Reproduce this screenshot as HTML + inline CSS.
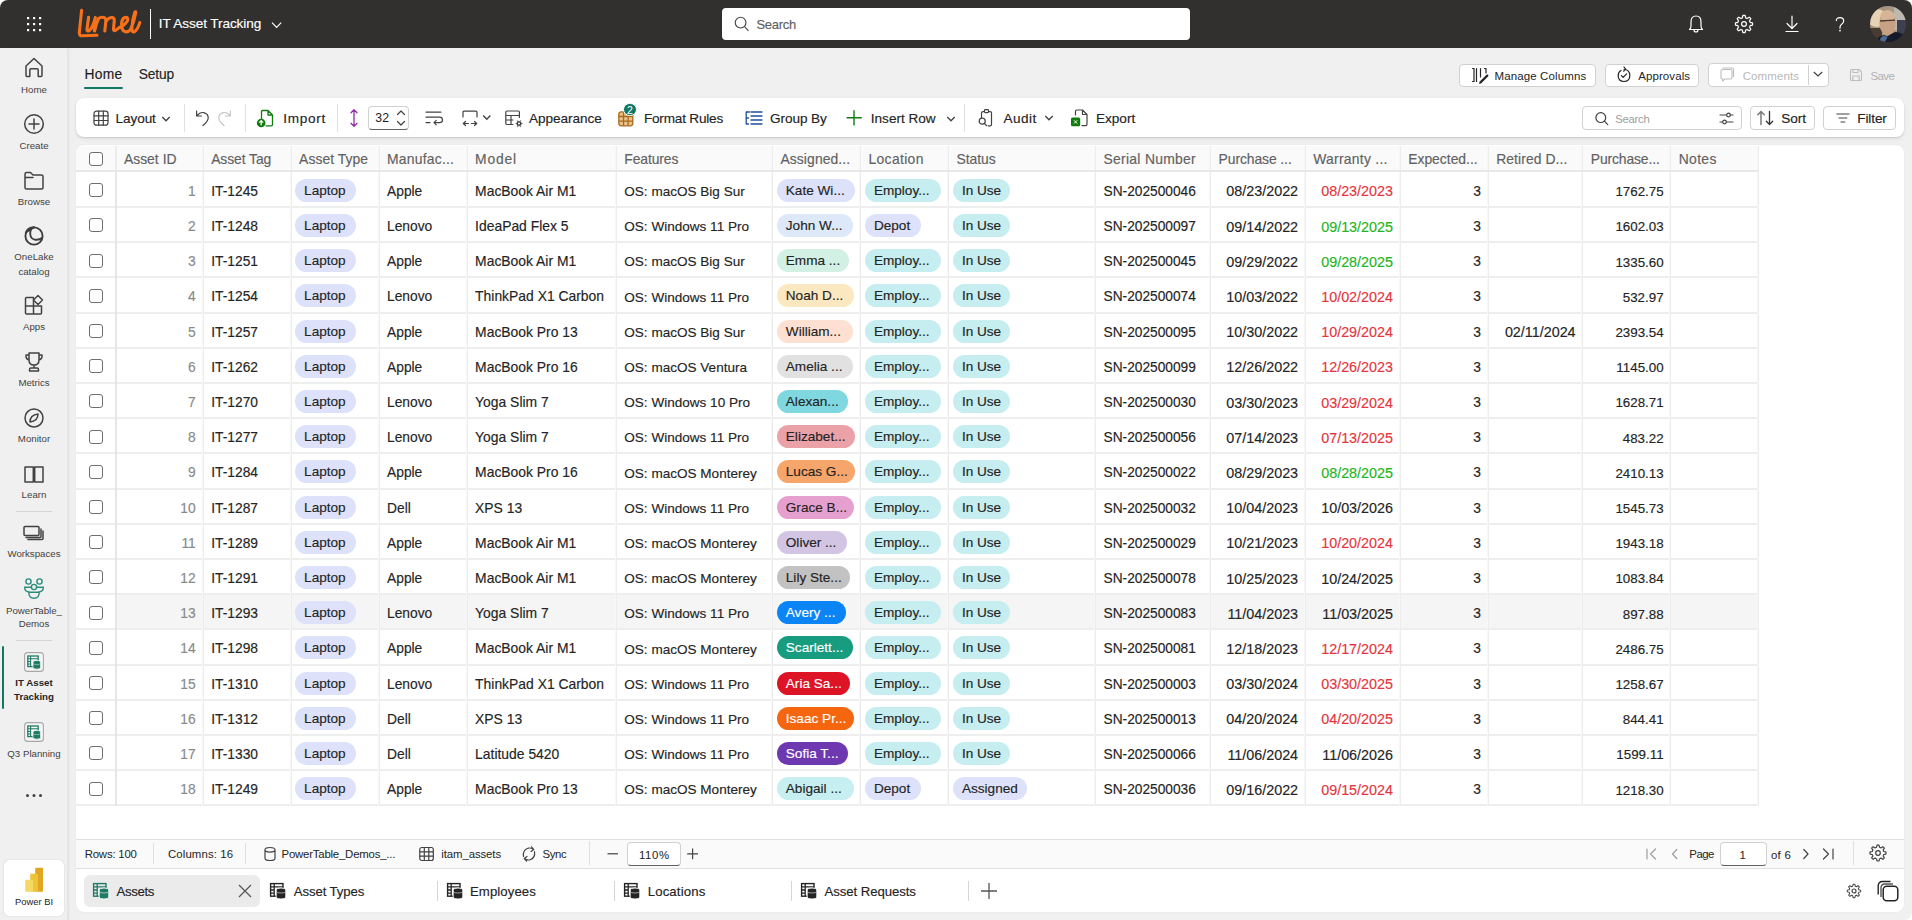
<!DOCTYPE html><html><head><meta charset="utf-8"><title>IT Asset Tracking</title><style>
*{box-sizing:border-box;margin:0;padding:0}
html,body{width:1912px;height:920px;overflow:hidden;background:#ffffff}
body{font-family:"Liberation Sans",sans-serif;color:#242424;position:relative}
.a{position:absolute}
.app{position:absolute;left:0;top:0;width:1912px;height:920px;background:#f0f0f0;border-radius:8px 8px 8px 0;overflow:hidden}
.top{position:absolute;left:0;top:0;width:1912px;height:48px;background:#31302e}
.nav{position:absolute;left:0;top:48px;width:68px;height:872px;background:#f0f0f0;border-right:1px solid #e3e3e3;box-shadow:1px 0 2px rgba(0,0,0,.06)}
.nl{position:absolute;left:0;width:68px;text-align:center;font-size:9.7px;color:#424242;line-height:13.5px;white-space:nowrap}
.ni{position:absolute;left:24px;width:20px;height:20px}
.t{position:absolute;white-space:nowrap;line-height:1;-webkit-text-stroke:0.15px currentColor}
.card{position:absolute;background:#fff;border-radius:8px}
.btn{position:absolute;background:#fff;border:1px solid #d1d1d1;border-radius:4px}
.sep{position:absolute;width:1px;background:#e0e0e0}
svg{position:absolute;overflow:visible}
.row{position:absolute;left:76px;width:1683px;height:35.2px;border-bottom:1px solid #e6e6e6}
.c{position:absolute;top:0;height:35px;font-size:13.8px;line-height:35px;white-space:nowrap;overflow:hidden;color:#242424}
.r{text-align:right}
.chip{-webkit-text-stroke:0.15px currentColor;position:absolute;top:6.6px;height:23px;border-radius:12px;font-size:13.6px;line-height:23px;padding-left:9px;white-space:nowrap;overflow:hidden;color:#242424}
.vl{position:absolute;width:1px;background:#e6e6e6}
.hd{position:absolute;top:0;height:26px;font-size:13.7px;line-height:26px;color:#616161;white-space:nowrap}
.cb{position:absolute;width:14px;height:14px;border:1.3px solid #6e6e6e;border-radius:3px;background:#fff}
.tab{position:absolute;top:875px;height:32px;font-size:13.2px;line-height:32px;color:#242424;white-space:nowrap}
.st{position:absolute;top:839px;height:29px;line-height:29px;font-size:11.3px;color:#424242;white-space:nowrap}
</style></head><body><div class="app">
<div class="top">
<svg style="left:0px;top:0px;" width="60" height="48" viewBox="0 0 60 48"><rect x="27" y="17" width="2.2" height="2.2" fill="#fff"/><rect x="27" y="23" width="2.2" height="2.2" fill="#fff"/><rect x="27" y="29" width="2.2" height="2.2" fill="#fff"/><rect x="33" y="17" width="2.2" height="2.2" fill="#fff"/><rect x="33" y="23" width="2.2" height="2.2" fill="#fff"/><rect x="33" y="29" width="2.2" height="2.2" fill="#fff"/><rect x="39" y="17" width="2.2" height="2.2" fill="#fff"/><rect x="39" y="23" width="2.2" height="2.2" fill="#fff"/><rect x="39" y="29" width="2.2" height="2.2" fill="#fff"/></svg>
<svg style="left:72px;top:6px;" width="72" height="36" viewBox="0 0 72 36"><g fill="none" stroke="#f7701a" stroke-width="3.1" stroke-linecap="round" stroke-linejoin="round"><path d="M9.6,4.4 L7.3,26.5 Q7,30 10.5,29.8 L25,29.3"/><path d="M16.6,11.2 L15,23.2 Q14.6,26 17.5,24.5 Q21,21 23.3,11.6 L22.3,24.8"/><path d="M22.6,24.8 Q24.4,17 26.6,12.4 Q28.5,10.8 31.8,11.4 Q34.2,12.2 33.8,15.5 L32.8,25 M33.8,16 Q36.5,11.3 40.2,11.5 Q42.6,12 42.3,15 L41.5,22.2 Q41.2,25.4 43.6,24.3 Q45.8,22.8 47.2,21.6"/><path d="M47.2,21.6 Q51.5,20.5 55.3,15.2 Q56.8,11.6 54,11.4 Q50.3,11.6 49.6,17 Q49.1,24.5 53.3,25.8 Q56.2,26.3 58.6,23.4"/><path d="M58.6,23.4 Q62,16 63.7,6.6 Q63.9,5 62.8,6.3 Q60.1,14 59.9,23 Q59.9,26.6 62.5,25.7 Q65.8,23.4 67.8,16.6"/></g></svg>
<div class="a" style="left:150px;top:9px;width:1px;height:30px;background:#ffffff"></div>
<div class="t" style="left:158.80px;top:17.39px;font-size:13.6px;color:#ffffff;letter-spacing:-0.097px;">IT Asset Tracking</div>
<svg style="left:270px;top:20px;" width="14" height="10" viewBox="0 0 14 10"><polyline points="2,2.6 6.6,7.4 11.2,2.6" fill="none" stroke="#fff" stroke-width="1.2"/></svg>
<div class="a" style="left:722px;top:8px;width:468px;height:32px;background:#fff;border-radius:4px"></div>
<svg style="left:734px;top:16px;" width="18" height="18" viewBox="0 0 18 18"><circle cx="6.6" cy="6.6" r="5.4" fill="none" stroke="#424242" stroke-width="1.1"/><line x1="10.5" y1="10.5" x2="14.5" y2="14.8" stroke="#424242" stroke-width="1.1"/></svg>
<div class="t" style="left:756.40px;top:17.50px;font-size:13.0px;color:#616161;letter-spacing:-0.278px;">Search</div>
<svg style="left:1686px;top:14px;" width="20" height="20" viewBox="0 0 20 20"><path fill="none" stroke="#ffffff" stroke-width="1.2" stroke-linecap="round" stroke-linejoin="round" d="M3.5,15.5 L16.5,15.5 Q15,14 15,12 L15,8 Q15,2 10,2 Q5,2 5,8 L5,12 Q5,14 3.5,15.5 Z"/><path fill="none" stroke="#ffffff" stroke-width="1.2" stroke-linecap="round" stroke-linejoin="round" d="M8,15.7 Q8,18 10,18 Q12,18 12,15.7"/></svg>
<svg style="left:1734px;top:14px;" width="20" height="20" viewBox="0 0 20 20"><path fill="none" stroke="#ffffff" stroke-width="1.2" stroke-linecap="round" stroke-linejoin="round" d="M18.60,10.00 L18.53,11.12 L16.09,11.63 L15.82,12.41 L15.46,13.15 L16.82,15.24 L16.08,16.08 L15.24,16.82 L13.15,15.46 L12.41,15.82 L11.63,16.09 L11.12,18.53 L10.00,18.60 L8.88,18.53 L8.37,16.09 L7.59,15.82 L6.85,15.46 L4.76,16.82 L3.92,16.08 L3.18,15.24 L4.54,13.15 L4.18,12.41 L3.91,11.63 L1.47,11.12 L1.40,10.00 L1.47,8.88 L3.91,8.37 L4.18,7.59 L4.54,6.85 L3.18,4.76 L3.92,3.92 L4.76,3.18 L6.85,4.54 L7.59,4.18 L8.37,3.91 L8.88,1.47 L10.00,1.40 L11.12,1.47 L11.63,3.91 L12.41,4.18 L13.15,4.54 L15.24,3.18 L16.08,3.92 L16.82,4.76 L15.46,6.85 L15.82,7.59 L16.09,8.37 L18.53,8.88 Z"/><circle cx="10" cy="10" r="2.4" fill="none" stroke="#ffffff" stroke-width="1.2" stroke-linecap="round" stroke-linejoin="round"/></svg>
<svg style="left:1782px;top:14px;" width="20" height="20" viewBox="0 0 20 20"><path fill="none" stroke="#ffffff" stroke-width="1.2" stroke-linecap="round" stroke-linejoin="round" d="M10,2 L10,14 M5,9.5 L10,14.5 L15,9.5 M4,17.5 L16,17.5"/></svg>
<svg style="left:1832px;top:14px;" width="16" height="20" viewBox="0 0 16 20"><path fill="none" stroke="#ffffff" stroke-width="1.2" stroke-linecap="round" stroke-linejoin="round" d="M4.3,6.6 Q4.3,3.6 8,3.6 Q11.7,3.6 11.7,6.8 Q11.7,9 9.4,10.4 Q8,11.3 8,13.4 L8,14.2"/><circle cx="8" cy="16.6" r="0.9" fill="#fff"/></svg>
<svg style="left:1870px;top:6px;" width="36" height="36" viewBox="0 0 36 36"><defs><clipPath id="avc"><circle cx="18" cy="18" r="18"/></clipPath></defs><g clip-path="url(#avc)" style="filter:blur(0.5px)"><rect width="36" height="36" fill="#a89580"/><ellipse cx="7" cy="12" rx="10" ry="9" fill="#e6d2b4"/><rect x="24" y="0" width="12" height="24" fill="#bdb8b0"/><rect x="27" y="14" width="9" height="22" fill="#3c4050"/><rect x="0" y="22" width="12" height="14" fill="#4a3b30"/><ellipse cx="17.5" cy="17" rx="8.2" ry="12" fill="#c8a182"/><ellipse cx="17.5" cy="10" rx="7" ry="6" fill="#d5b595"/><path d="M10,15 L25,14.2" stroke="#4a3a35" stroke-width="1.3"/><path d="M4,36 L9,31 Q14,28 17,30.5 Q21,28 25,26 Q31,26 36,31 L36,36 Z" fill="#161a28"/><path d="M9,36 L11,31.5 Q14,29 17.5,31 L15,36 Z" fill="#4d6a98"/></g></svg>
</div>
<div class="nav"></div>
<svg style="left:0px;top:48px;" width="68" height="40" viewBox="0 0 68 40"><path fill="none" stroke="#424242" stroke-width="1.5" stroke-linecap="round" stroke-linejoin="round" d="M26,18 L34,10.5 L42,18 L42,27.5 Q42,28.5 41,28.5 L38.2,28.5 L38.2,22 Q38.2,20.8 37,20.8 L31,20.8 Q29.8,20.8 29.8,22 L29.8,28.5 L27,28.5 Q26,28.5 26,27.5 Z"/></svg>
<div class="t" style="left:0;width:68px;text-align:center;top:84.79px;font-size:9.7px;color:#424242;-webkit-text-stroke:0;">Home</div>
<svg style="left:0px;top:104px;" width="68" height="40" viewBox="0 0 68 40"><circle cx="34" cy="20" r="9.3" fill="none" stroke="#424242" stroke-width="1.5" stroke-linecap="round" stroke-linejoin="round"/><path fill="none" stroke="#424242" stroke-width="1.5" stroke-linecap="round" stroke-linejoin="round" d="M34,15 L34,25 M29,20 L39,20"/></svg>
<div class="t" style="left:0;width:68px;text-align:center;top:141.09px;font-size:9.7px;color:#424242;-webkit-text-stroke:0;">Create</div>
<svg style="left:0px;top:160px;" width="68" height="40" viewBox="0 0 68 40"><path fill="none" stroke="#424242" stroke-width="1.5" stroke-linecap="round" stroke-linejoin="round" d="M25,14 Q25,12.5 26.5,12.5 L30.5,12.5 L33,15 L41.5,15 Q43,15 43,16.5 L43,27.5 Q43,29 41.5,29 L26.5,29 Q25,29 25,27.5 Z M25,17.5 L33,17.5"/></svg>
<div class="t" style="left:0;width:68px;text-align:center;top:197.09px;font-size:9.7px;color:#424242;-webkit-text-stroke:0;">Browse</div>
<svg style="left:0px;top:216px;" width="68" height="40" viewBox="0 0 68 40"><circle cx="34" cy="20" r="8.6" fill="none" stroke="#3d3d3d" stroke-width="1.9"/><path d="M25.6,17.5 Q27.5,11.2 34.5,11.3 Q31.2,12.2 30.3,14.8" fill="#3d3d3d" stroke="#3d3d3d" stroke-width="2"/><path d="M30.4,14.5 Q29.2,22.5 34.5,23.6 Q39,24.4 42.4,21.8" fill="none" stroke="#3d3d3d" stroke-width="1.9"/></svg>
<div class="t" style="left:0;width:68px;text-align:center;top:252.49px;font-size:9.7px;color:#424242;-webkit-text-stroke:0;">OneLake</div>
<div class="t" style="left:0;width:68px;text-align:center;top:266.69px;font-size:9.7px;color:#424242;-webkit-text-stroke:0;">catalog</div>
<svg style="left:0px;top:286px;" width="68" height="40" viewBox="0 0 68 40"><path fill="none" stroke="#424242" stroke-width="1.5" stroke-linecap="round" stroke-linejoin="round" d="M25.5,20 L33.5,20 L33.5,28 L26.5,28 Q25.5,28 25.5,27 Z M33.5,20 L41.5,20 L41.5,27 Q41.5,28 40.5,28 L33.5,28 M25.5,20 L25.5,12.5 Q25.5,11.5 26.5,11.5 L33.5,11.5 L33.5,20"/><path fill="none" stroke="#424242" stroke-width="1.5" stroke-linecap="round" stroke-linejoin="round" d="M38,9.5 L42.5,14 L38,18.5 L33.5,14 Z"/></svg>
<div class="t" style="left:0;width:68px;text-align:center;top:322.29px;font-size:9.7px;color:#424242;-webkit-text-stroke:0;">Apps</div>
<svg style="left:0px;top:342px;" width="68" height="40" viewBox="0 0 68 40"><path fill="none" stroke="#424242" stroke-width="1.5" stroke-linecap="round" stroke-linejoin="round" d="M29,11 L39,11 L39,18 Q39,23 34,23 Q29,23 29,18 Z M29,13 L26,13 Q25.5,17 29,18 M39,13 L42,13 Q42.5,17 39,18 M34,23 L34,26 M29.5,29 L38.5,29 L38.5,27.5 Q38.5,26 37,26 L31,26 Q29.5,26 29.5,27.5 Z"/></svg>
<div class="t" style="left:0;width:68px;text-align:center;top:378.19px;font-size:9.7px;color:#424242;-webkit-text-stroke:0;">Metrics</div>
<svg style="left:0px;top:398px;" width="68" height="40" viewBox="0 0 68 40"><circle cx="34" cy="20" r="9" fill="none" stroke="#424242" stroke-width="1.5" stroke-linecap="round" stroke-linejoin="round"/><path fill="none" stroke="#424242" stroke-width="1.5" stroke-linecap="round" stroke-linejoin="round" d="M30,24 Q30,17 38,16 Q38,23 30,24 Z"/></svg>
<div class="t" style="left:0;width:68px;text-align:center;top:434.19px;font-size:9.7px;color:#424242;-webkit-text-stroke:0;">Monitor</div>
<svg style="left:0px;top:456px;" width="68" height="40" viewBox="0 0 68 40"><path fill="none" stroke="#424242" stroke-width="1.5" stroke-linecap="round" stroke-linejoin="round" d="M25,11 L33.3,11 L33.3,26 L25,26 Z M34.7,11 L43,11 L43,26 L34.7,26 Z"/></svg>
<div class="t" style="left:0;width:68px;text-align:center;top:489.79px;font-size:9.7px;color:#424242;-webkit-text-stroke:0;">Learn</div>
<div class="a" style="left:16px;top:511px;width:36px;height:1px;background:#d6d6d6"></div>
<svg style="left:0px;top:516px;" width="68" height="40" viewBox="0 0 68 40"><path fill="none" stroke="#424242" stroke-width="1.5" stroke-linecap="round" stroke-linejoin="round" d="M25,10.5 L38,10.5 Q39,10.5 39,11.5 L39,18.5 Q39,19.5 38,19.5 L25,19.5 Q24,19.5 24,18.5 L24,11.5 Q24,10.5 25,10.5 Z M41,13 L41,20.5 Q41,21.5 40,21.5 L26,21.5 M43,15 L43,22.5 Q43,23.5 42,23.5 L28,23.5"/></svg>
<div class="t" style="left:0;width:68px;text-align:center;top:549.29px;font-size:9.7px;color:#424242;-webkit-text-stroke:0;">Workspaces</div>
<svg style="left:0px;top:570px;" width="68" height="40" viewBox="0 0 68 40"><circle cx="28.5" cy="11.5" r="2.6" fill="none" stroke="#2a8d7c" stroke-width="1.4" stroke-linecap="round"/><circle cx="39.5" cy="11.5" r="2.6" fill="none" stroke="#2a8d7c" stroke-width="1.4" stroke-linecap="round"/><circle cx="34" cy="17" r="2.6" fill="none" stroke="#2a8d7c" stroke-width="1.4" stroke-linecap="round"/><path fill="none" stroke="#2a8d7c" stroke-width="1.4" stroke-linecap="round" d="M24.6,17.3 Q24.8,21.8 29.4,22 M43.4,17.3 Q43.2,21.8 38.6,22 M24.6,17.3 L31.2,17.3 M36.8,17.3 L43.4,17.3 M28.8,22.2 L39.2,22.2 Q39.2,28.2 34,28.2 Q28.8,28.2 28.8,22.2 Z"/></svg>
<div class="t" style="left:0;width:68px;text-align:center;top:605.79px;font-size:9.7px;color:#424242;-webkit-text-stroke:0;">PowerTable_</div>
<div class="t" style="left:0;width:68px;text-align:center;top:618.99px;font-size:9.7px;color:#424242;-webkit-text-stroke:0;">Demos</div>
<div class="a" style="left:16px;top:640px;width:36px;height:1px;background:#d6d6d6"></div>
<div class="a" style="left:2px;top:646px;width:2.4px;height:63px;background:#117865;border-radius:1px"></div>
<svg style="left:24px;top:652px;" width="20" height="20" viewBox="0 0 20 20"><rect x="0.6" y="0.6" width="18.8" height="18.8" rx="3" fill="#f5f5f5" stroke="#a8a8a8" stroke-width="1.1"/><rect x="3.8" y="4" width="10.4" height="10.6" fill="none" stroke="#1f7a66" stroke-width="1.3"/><path d="M6.6,4 L6.6,14.6 M3.8,6.8 L14.2,6.8 M3.8,9.5 L6.6,9.5 M3.8,12 L6.6,12" fill="none" stroke="#1f7a66" stroke-width="1.1"/><path d="M9,10 Q9,8.4 12.8,8.4 Q16.6,8.4 16.6,10 L16.6,15.6 Q16.6,17.2 12.8,17.2 Q9,17.2 9,15.6 Z" fill="#1f7a66" stroke="#f5f5f5" stroke-width="0.8"/><path d="M9.3,11.4 Q9.3,12.6 12.8,12.6 Q16.3,12.6 16.3,11.4" fill="none" stroke="#fff" stroke-width="0.6" opacity="0.7"/></svg>
<div class="t" style="left:0;width:68px;text-align:center;top:678.39px;font-size:9.7px;color:#242424;-webkit-text-stroke:0;font-weight:bold;">IT Asset</div>
<div class="t" style="left:0;width:68px;text-align:center;top:691.79px;font-size:9.7px;color:#242424;-webkit-text-stroke:0;font-weight:bold;">Tracking</div>
<svg style="left:24px;top:722px;" width="20" height="20" viewBox="0 0 20 20"><rect x="0.6" y="0.6" width="18.8" height="18.8" rx="3" fill="#f5f5f5" stroke="#a8a8a8" stroke-width="1.1"/><rect x="3.8" y="4" width="10.4" height="10.6" fill="none" stroke="#1f7a66" stroke-width="1.3"/><path d="M6.6,4 L6.6,14.6 M3.8,6.8 L14.2,6.8 M3.8,9.5 L6.6,9.5 M3.8,12 L6.6,12" fill="none" stroke="#1f7a66" stroke-width="1.1"/><path d="M9,10 Q9,8.4 12.8,8.4 Q16.6,8.4 16.6,10 L16.6,15.6 Q16.6,17.2 12.8,17.2 Q9,17.2 9,15.6 Z" fill="#1f7a66" stroke="#f5f5f5" stroke-width="0.8"/><path d="M9.3,11.4 Q9.3,12.6 12.8,12.6 Q16.3,12.6 16.3,11.4" fill="none" stroke="#fff" stroke-width="0.6" opacity="0.7"/></svg>
<div class="t" style="left:0;width:68px;text-align:center;top:749.09px;font-size:9.7px;color:#424242;-webkit-text-stroke:0;">Q3 Planning</div>
<svg style="left:0px;top:790px;" width="68" height="10" viewBox="0 0 68 10"><circle cx="27.5" cy="5.5" r="1.5" fill="#424242"/><circle cx="34" cy="5.5" r="1.5" fill="#424242"/><circle cx="40.5" cy="5.5" r="1.5" fill="#424242"/></svg>
<div class="a" style="left:4px;top:860px;width:60px;height:56px;background:#fff;border-radius:6px;box-shadow:0 0 2px rgba(0,0,0,.12)"></div>
<svg style="left:24px;top:866px;" width="20" height="28" viewBox="0 0 20 28"><rect x="11.2" y="1.8" width="7.8" height="24" rx="1" fill="#e0a61f"/><rect x="6.2" y="7.8" width="7.8" height="18" rx="1" fill="#eec33a"/><rect x="1.2" y="13.8" width="7.8" height="12" rx="1" fill="#f5d866"/></svg>
<div class="t" style="left:0;width:68px;text-align:center;top:897.04px;font-size:9.4px;color:#242424;-webkit-text-stroke:0;">Power BI</div>
<div class="t" style="left:84.60px;top:68.12px;font-size:13.8px;color:#1c1c1c;letter-spacing:0.297px;">Home</div>
<div class="a" style="left:84px;top:86.6px;width:39px;height:2.6px;background:#117865;border-radius:1px"></div>
<div class="t" style="left:138.80px;top:68.12px;font-size:13.8px;color:#242424;letter-spacing:-0.165px;">Setup</div>
<div class="btn" style="left:1459px;top:63.5px;width:136.5px;height:23.2px"></div>
<svg style="left:1471px;top:66px;" width="18" height="18" viewBox="0 0 18 18"><path fill="none" stroke="#242424" stroke-width="1.2" stroke-linecap="round" stroke-linejoin="round" d="M1.5,2.5 L3,2.5 L3,15.5 L1.5,15.5 M5.5,2.5 L5.5,15.5 M9.5,2.5 L9.5,11 M13.5,2.5 L15,2.5 L15,7"/><path d="M8.5,15.8 L15.5,8.8 Q16.5,8 17.2,8.8 Q17.8,9.6 17,10.4 L10,17.4 L8,17.8 Z" fill="#242424"/></svg>
<div class="t" style="left:1494.50px;top:70.87px;font-size:11.5px;color:#242424;-webkit-text-stroke:0;letter-spacing:0.121px;">Manage Columns</div>
<div class="btn" style="left:1604.5px;top:63.5px;width:94px;height:23.2px"></div>
<svg style="left:1615px;top:66px;" width="18" height="18" viewBox="0 0 18 18"><path fill="none" stroke="#242424" stroke-width="1.2" stroke-linecap="round" stroke-linejoin="round" d="M9,3.5 Q14.8,3.5 14.8,9.5 Q14.8,15.5 9,15.5 Q3.2,15.5 3.2,9.5 Q3.2,6 6,4.5 M9,1 L10.8,3.4 L8.6,5.2 M6.4,9.6 L8.2,11.4 L11.6,7.8"/></svg>
<div class="t" style="left:1638.30px;top:70.87px;font-size:11.5px;color:#242424;-webkit-text-stroke:0;letter-spacing:0.071px;">Approvals</div>
<div class="btn" style="left:1707.5px;top:63.3px;width:121px;height:23.3px"></div>
<div class="a" style="left:1808px;top:65px;width:1px;height:20px;background:#d1d1d1"></div>
<svg style="left:1719px;top:67px;" width="17" height="16" viewBox="0 0 17 16"><path fill="none" stroke="#bdbdbd" stroke-width="1.1" stroke-linecap="round" stroke-linejoin="round" d="M2,4 Q2,2.5 3.5,2.5 L11.5,2.5 Q13,2.5 13,4 L13,10.5 Q13,12 11.5,12 L6,12 L3.5,14 L3.5,12 Q2,12 2,10.5 Z M4,1 L13,1 Q14.5,1 14.5,2.5 L14.5,9.5"/></svg>
<div class="t" style="left:1742.70px;top:70.87px;font-size:11.5px;color:#b8b8b8;-webkit-text-stroke:0;letter-spacing:0.101px;">Comments</div>
<svg style="left:1812px;top:70px;" width="12" height="8" viewBox="0 0 12 8"><polyline points="1.8,2 6,6 10.2,2" fill="none" stroke="#424242" stroke-width="1.2"/></svg>
<svg style="left:1849px;top:68px;" width="14" height="14" viewBox="0 0 14 14"><path fill="none" stroke="#bdbdbd" stroke-width="1.1" stroke-linecap="round" stroke-linejoin="round" d="M1.5,2.5 Q1.5,1.5 2.5,1.5 L10,1.5 L12.5,4 L12.5,11.5 Q12.5,12.5 11.5,12.5 L2.5,12.5 Q1.5,12.5 1.5,11.5 Z M4,1.5 L4,4.5 L9,4.5 L9,1.5 M3.8,12.5 L3.8,8 L10.2,8 L10.2,12.5"/></svg>
<div class="t" style="left:1870.50px;top:70.87px;font-size:11.5px;color:#b0b0b0;-webkit-text-stroke:0;letter-spacing:-0.604px;">Save</div>
<div class="card" style="left:76px;top:98px;width:1828px;height:39px;box-shadow:0 1px 2px rgba(0,0,0,.13),0 2px 5px rgba(0,0,0,.05)"></div>
<svg style="left:93px;top:110px;" width="16" height="16" viewBox="0 0 16 16"><rect x="1" y="1.2" width="14" height="14" rx="2.5" fill="none" stroke="#424242" stroke-width="1.2" stroke-linecap="round" stroke-linejoin="round"/><path fill="none" stroke="#424242" stroke-width="1.2" stroke-linecap="round" stroke-linejoin="round" d="M5.7,1.2 L5.7,15.2 M10.3,1.2 L10.3,15.2 M1,5.9 L15,5.9 M1,10.5 L15,10.5"/></svg>
<div class="t" style="left:115.60px;top:111.59px;font-size:13.6px;color:#242424;letter-spacing:-0.106px;">Layout</div>
<svg style="left:160px;top:114px;" width="12" height="10" viewBox="0 0 12 10"><polyline points="2.3,3 6,6.7 9.7,3" fill="none" stroke="#424242" stroke-width="1.35"/></svg>
<div class="a" style="left:183.5px;top:104px;width:1px;height:28px;background:#e0e0e0"></div>
<svg style="left:194px;top:109px;" width="16" height="18" viewBox="0 0 16 18"><path fill="none" stroke="#424242" stroke-width="1.2" stroke-linecap="round" stroke-linejoin="round" d="M2.6,2 L2.6,7 L7.6,7 M2.8,6.8 Q6,3 9.8,3.6 Q14.5,4.8 14.2,9.2 Q13.8,12.5 9,16.5"/></svg>
<svg style="left:217px;top:109px;" width="16" height="18" viewBox="0 0 16 18"><path fill="none" stroke="#c6c6c6" stroke-width="1.2" stroke-linecap="round" stroke-linejoin="round" d="M13.4,2 L13.4,7 L8.4,7 M13.2,6.8 Q10,3 6.2,3.6 Q1.5,4.8 1.8,9.2 Q2.2,12.5 7,16.5"/></svg>
<div class="a" style="left:244.5px;top:104px;width:1px;height:28px;background:#e0e0e0"></div>
<svg style="left:256px;top:109px;" width="20" height="19" viewBox="0 0 20 19"><path fill="none" stroke="#107c10" stroke-width="1.3" stroke-linejoin="round" d="M5.5,12 L5.5,2.6 Q5.5,1.5 6.6,1.5 L12,1.5 L16.5,6 L16.5,15.8 Q16.5,16.9 15.4,16.9 L9.5,16.9 M12,1.5 L12,6 L16.5,6"/><circle cx="5.2" cy="14" r="4.3" fill="#107c10"/><path d="M5.2,16.3 L5.2,11.8 M3.2,13.6 L5.2,11.6 L7.2,13.6" fill="none" stroke="#fff" stroke-width="1.2"/></svg>
<div class="t" style="left:283.30px;top:111.59px;font-size:13.6px;color:#242424;letter-spacing:0.712px;">Import</div>
<div class="a" style="left:337.4px;top:104px;width:1px;height:28px;background:#e0e0e0"></div>
<svg style="left:348px;top:108px;" width="12" height="20" viewBox="0 0 12 20"><path fill="none" stroke="#8f2fa8" stroke-width="1.3" stroke-linecap="round" stroke-linejoin="round" d="M6,2 L6,18 M3,4.8 L6,1.8 L9,4.8 M3,15.2 L6,18.2 L9,15.2"/></svg>
<div class="a" style="left:368.4px;top:106.2px;width:41px;height:23.5px;background:#fff;border:1px solid #d1d1d1;border-bottom:1.5px solid #616161;border-radius:4px"></div>
<div class="t" style="left:375.30px;top:111.99px;font-size:12.3px;color:#242424;-webkit-text-stroke:0;">32</div>
<svg style="left:395px;top:108px;" width="12" height="20" viewBox="0 0 12 20"><polyline points="2.5,6.5 6,3 9.5,6.5" fill="none" stroke="#424242" stroke-width="1.2" stroke-linecap="round" stroke-linejoin="round"/><polyline points="2.5,13.5 6,17 9.5,13.5" fill="none" stroke="#424242" stroke-width="1.2" stroke-linecap="round" stroke-linejoin="round"/></svg>
<svg style="left:424px;top:110px;" width="20" height="16" viewBox="0 0 20 16"><path fill="none" stroke="#424242" stroke-width="1.2" stroke-linecap="round" stroke-linejoin="round" d="M2,2.2 L17,2.2 M2,7.2 L15.5,7.2 Q18.5,7.2 18.5,10 Q18.5,12.6 15.5,12.6 L10,12.6 M12.2,10.4 L10,12.6 L12.2,14.8 M2,12.6 L6,12.6"/></svg>
<svg style="left:460px;top:109px;" width="20" height="18" viewBox="0 0 20 18"><path fill="none" stroke="#424242" stroke-width="1.2" stroke-linecap="round" stroke-linejoin="round" d="M3,8 L3,3.2 Q3,2.2 4,2.2 L16,2.2 Q17,2.2 17,3.2 L17,8 M3.5,14.5 L8.5,14.5 M11.5,14.5 L16.5,14.5 M5.5,12.5 L3.3,14.5 L5.5,16.5 M14.5,12.5 L16.7,14.5 L14.5,16.5"/></svg>
<svg style="left:481px;top:113px;" width="12" height="10" viewBox="0 0 12 10"><polyline points="2.2,2.6 5.8,6.2 9.4,2.6" fill="none" stroke="#424242" stroke-width="1.4"/></svg>
<svg style="left:504px;top:109px;" width="20" height="19" viewBox="0 0 20 19"><path fill="none" stroke="#424242" stroke-width="1.2" stroke-linecap="round" stroke-linejoin="round" d="M9,15.5 L3,15.5 Q1.8,15.5 1.8,14.3 L1.8,3.2 Q1.8,2 3,2 L14.2,2 Q15.4,2 15.4,3.2 L15.4,8.5 M1.8,6.5 L15.4,6.5 M1.8,11 L9,11 M7,6.5 L7,15.5"/><path d="M18.90,14.60 L18.87,15.11 L17.61,15.30 L17.49,15.63 L17.34,15.95 L17.14,16.24 L16.91,16.51 L17.37,17.69 L16.95,17.98 L16.49,18.20 L15.70,17.21 L15.35,17.28 L15.00,17.30 L14.65,17.28 L14.30,17.21 L13.51,18.20 L13.05,17.98 L12.63,17.69 L13.09,16.51 L12.86,16.24 L12.66,15.95 L12.51,15.63 L12.39,15.30 L11.13,15.11 L11.10,14.60 L11.13,14.09 L12.39,13.90 L12.51,13.57 L12.66,13.25 L12.86,12.96 L13.09,12.69 L12.63,11.51 L13.05,11.22 L13.51,11.00 L14.30,11.99 L14.65,11.92 L15.00,11.90 L15.35,11.92 L15.70,11.99 L16.49,11.00 L16.95,11.22 L17.37,11.51 L16.91,12.69 L17.14,12.96 L17.34,13.25 L17.49,13.57 L17.61,13.90 L18.87,14.09 Z" fill="#424242" stroke="#fff" stroke-width="0.6"/><circle cx="15" cy="14.6" r="1" fill="#fff"/></svg>
<div class="t" style="left:529.00px;top:111.59px;font-size:13.6px;color:#242424;letter-spacing:-0.060px;">Appearance</div>
<svg style="left:617px;top:110px;" width="18" height="17" viewBox="0 0 18 17"><rect x="1.8" y="1.8" width="14" height="14" rx="2.5" fill="#e9c48a" stroke="#a86a1f" stroke-width="1.3"/><path fill="none" stroke="#a86a1f" stroke-width="1.3" stroke-linejoin="round" d="M6.5,1.8 L6.5,15.8 M11.1,1.8 L11.1,15.8 M1.8,6.5 L15.8,6.5 M1.8,11.1 L15.8,11.1"/></svg>
<div class="a" style="left:623.3px;top:102.6px;width:13.4px;height:13.4px;border-radius:50%;background:#117865;border:1px solid #fff"></div>
<div class="t" style="left:627.00px;top:104.71px;font-size:10.5px;color:#ffffff;-webkit-text-stroke:0;">2</div>
<div class="t" style="left:643.90px;top:111.59px;font-size:13.6px;color:#242424;letter-spacing:-0.201px;">Format Rules</div>
<svg style="left:744px;top:109px;" width="20" height="18" viewBox="0 0 20 18"><path fill="none" stroke="#1f4f9a" stroke-width="1.3" stroke-linecap="round" stroke-linejoin="round" d="M5.5,3 L2.2,3 L2.2,15 L4.5,15 M2.2,9 L4.5,9 M7,3 L18,3 M7,7 L18,7 M7,11 L18,11 M7,15 L18,15"/></svg>
<div class="t" style="left:770.00px;top:111.59px;font-size:13.6px;color:#242424;letter-spacing:-0.078px;">Group By</div>
<svg style="left:845px;top:109px;" width="18" height="18" viewBox="0 0 18 18"><path fill="none" stroke="#107c10" stroke-width="1.4" d="M9,1.2 L9,16.4 M1.6,8.8 L16.8,8.8"/></svg>
<div class="t" style="left:870.80px;top:111.59px;font-size:13.6px;color:#242424;letter-spacing:-0.011px;">Insert Row</div>
<svg style="left:945px;top:114px;" width="12" height="10" viewBox="0 0 12 10"><polyline points="2.3,3 6,6.7 9.7,3" fill="none" stroke="#424242" stroke-width="1.35"/></svg>
<div class="a" style="left:964.4px;top:104px;width:1px;height:28px;background:#e0e0e0"></div>
<svg style="left:977px;top:108px;" width="18" height="20" viewBox="0 0 18 20"><path fill="none" stroke="#424242" stroke-width="1.2" stroke-linecap="round" stroke-linejoin="round" d="M4.5,9.5 L4.5,5 Q4.5,3.6 5.9,3.6 L7.5,3.6 M11.5,3.6 L13.1,3.6 Q14.5,3.6 14.5,5 L14.5,16.5 Q14.5,17.8 13.1,17.8 L11,17.8 M7.5,2.5 Q7.5,1.7 8.3,1.7 L10.7,1.7 Q11.5,1.7 11.5,2.5 L11.5,3.8 Q11.5,4.6 10.7,4.6 L8.3,4.6 Q7.5,4.6 7.5,3.8 Z"/><circle cx="5.2" cy="13.2" r="3" fill="none" stroke="#424242" stroke-width="1.2" stroke-linecap="round" stroke-linejoin="round"/><path fill="none" stroke="#424242" stroke-width="1.2" stroke-linecap="round" stroke-linejoin="round" d="M7.4,15.4 L9.4,17.5"/></svg>
<div class="t" style="left:1003.40px;top:111.59px;font-size:13.6px;color:#242424;letter-spacing:0.501px;">Audit</div>
<svg style="left:1043px;top:113px;" width="12" height="10" viewBox="0 0 12 10"><polyline points="2.3,3 6,6.7 9.7,3" fill="none" stroke="#424242" stroke-width="1.35"/></svg>
<svg style="left:1070px;top:108px;" width="19" height="20" viewBox="0 0 19 20"><path fill="none" stroke="#424242" stroke-width="1.2" stroke-linecap="round" stroke-linejoin="round" d="M5.5,7 L5.5,3.3 Q5.5,2 6.8,2 L12.5,2 L17,6.5 L17,16.3 Q17,17.6 15.7,17.6 L12,17.6 M12.5,2 L12.5,6.5 L17,6.5"/><rect x="1" y="9.5" width="9.2" height="8.8" rx="1.5" fill="#107c10"/><path d="M4,12.3 L7.2,15.5 M7.2,12.3 L4,15.5" stroke="#fff" stroke-width="1"/></svg>
<div class="t" style="left:1096.00px;top:111.59px;font-size:13.6px;color:#242424;letter-spacing:-0.021px;">Export</div>
<div class="btn" style="left:1582px;top:106.2px;width:159.6px;height:23.8px"></div>
<svg style="left:1594px;top:111px;" width="16" height="16" viewBox="0 0 16 16"><circle cx="6.8" cy="6.6" r="4.9" fill="none" stroke="#424242" stroke-width="1.2" stroke-linecap="round" stroke-linejoin="round"/><path fill="none" stroke="#424242" stroke-width="1.2" stroke-linecap="round" stroke-linejoin="round" d="M10.4,10.2 L13.8,13.6"/></svg>
<div class="t" style="left:1615.30px;top:114.03px;font-size:11.3px;color:#9e9e9e;-webkit-text-stroke:0;letter-spacing:-0.280px;">Search</div>
<svg style="left:1719px;top:111px;" width="15" height="15" viewBox="0 0 15 15"><path fill="none" stroke="#424242" stroke-width="1.2" stroke-linecap="round" stroke-linejoin="round" d="M1,4 L14,4 M1,11 L14,11"/><circle cx="9.5" cy="4" r="1.8" fill="#fff" stroke="#424242" stroke-width="1.2"/><circle cx="5.5" cy="11" r="1.8" fill="#fff" stroke="#424242" stroke-width="1.2"/></svg>
<div class="btn" style="left:1750px;top:106.2px;width:65px;height:23.8px"></div>
<svg style="left:1756px;top:109px;" width="19" height="18" viewBox="0 0 19 18"><path fill="none" stroke="#7a7a7a" stroke-width="1.5" stroke-linecap="round" stroke-linejoin="round" d="M5,15.5 L5,2.5 M1.8,5.8 L5,2.5 L8.2,5.8"/><path fill="none" stroke="#333" stroke-width="1.3" stroke-linecap="round" stroke-linejoin="round" d="M13.5,2.5 L13.5,15.5 M10.3,12.2 L13.5,15.5 L16.7,12.2"/></svg>
<div class="t" style="left:1781.20px;top:111.59px;font-size:13.6px;color:#242424;letter-spacing:-0.014px;">Sort</div>
<div class="btn" style="left:1823.4px;top:106.2px;width:72.4px;height:23.8px"></div>
<svg style="left:1835px;top:111px;" width="16" height="15" viewBox="0 0 16 15"><path fill="none" stroke="#424242" stroke-width="1.2" stroke-linecap="round" stroke-linejoin="round" d="M1.8,3 L14,3 M4,7 L11.8,7 M6,11 L9.8,11"/></svg>
<div class="t" style="left:1857.20px;top:111.59px;font-size:13.6px;color:#242424;letter-spacing:-0.104px;">Filter</div>
<div class="card" style="left:76px;top:145.4px;width:1828px;height:766.6px;box-shadow:0 0 2px rgba(0,0,0,.06)"></div>
<div class="a" style="left:76px;top:146px;width:1683px;height:25px;background:#fafafa;border-top-left-radius:8px"></div>
<div class="t" style="left:123.90px;top:153.03px;font-size:13.9px;color:#616161;letter-spacing:0.025px;">Asset ID</div>
<div class="t" style="left:211.20px;top:153.03px;font-size:13.9px;color:#616161;letter-spacing:-0.085px;">Asset Tag</div>
<div class="t" style="left:299.10px;top:153.03px;font-size:13.9px;color:#616161;letter-spacing:0.055px;">Asset Type</div>
<div class="t" style="left:387.00px;top:153.03px;font-size:13.9px;color:#616161;letter-spacing:0.234px;">Manufac...</div>
<div class="t" style="left:475.10px;top:153.03px;font-size:13.9px;color:#616161;letter-spacing:0.811px;">Model</div>
<div class="t" style="left:624.30px;top:153.03px;font-size:13.9px;color:#616161;letter-spacing:-0.107px;">Features</div>
<div class="t" style="left:780.40px;top:153.03px;font-size:13.9px;color:#616161;letter-spacing:0.104px;">Assigned...</div>
<div class="t" style="left:868.50px;top:153.03px;font-size:13.9px;color:#616161;letter-spacing:0.336px;">Location</div>
<div class="t" style="left:956.50px;top:153.03px;font-size:13.9px;color:#616161;letter-spacing:-0.041px;">Status</div>
<div class="t" style="left:1103.50px;top:153.03px;font-size:13.9px;color:#616161;letter-spacing:0.289px;">Serial Number</div>
<div class="t" style="left:1218.60px;top:153.03px;font-size:13.9px;color:#616161;letter-spacing:-0.088px;">Purchase ...</div>
<div class="t" style="left:1313.20px;top:153.03px;font-size:13.9px;color:#616161;letter-spacing:0.272px;">Warranty ...</div>
<div class="t" style="left:1408.20px;top:153.03px;font-size:13.9px;color:#616161;letter-spacing:-0.004px;">Expected...</div>
<div class="t" style="left:1496.20px;top:153.03px;font-size:13.9px;color:#616161;letter-spacing:0.074px;">Retired D...</div>
<div class="t" style="left:1590.80px;top:153.03px;font-size:13.9px;color:#616161;letter-spacing:-0.130px;">Purchase...</div>
<div class="t" style="left:1678.70px;top:153.03px;font-size:13.9px;color:#616161;letter-spacing:0.348px;">Notes</div>
<div class="cb" style="left:89px;top:152px"></div>
<div class="a" style="left:117px;top:594.60px;width:1642px;height:35.2px;background:#f5f5f5"></div>
<div class="a" style="left:76px;top:206px;width:1683px;height:2px;background:#eeeeee"></div>
<div class="a" style="left:76px;top:241px;width:1683px;height:2px;background:#eeeeee"></div>
<div class="a" style="left:76px;top:276px;width:1683px;height:2px;background:#eeeeee"></div>
<div class="a" style="left:76px;top:312px;width:1683px;height:2px;background:#eeeeee"></div>
<div class="a" style="left:76px;top:347px;width:1683px;height:2px;background:#eeeeee"></div>
<div class="a" style="left:76px;top:382px;width:1683px;height:2px;background:#eeeeee"></div>
<div class="a" style="left:76px;top:417px;width:1683px;height:2px;background:#eeeeee"></div>
<div class="a" style="left:76px;top:452px;width:1683px;height:2px;background:#eeeeee"></div>
<div class="a" style="left:76px;top:488px;width:1683px;height:2px;background:#eeeeee"></div>
<div class="a" style="left:76px;top:523px;width:1683px;height:2px;background:#eeeeee"></div>
<div class="a" style="left:76px;top:558px;width:1683px;height:2px;background:#eeeeee"></div>
<div class="a" style="left:76px;top:593px;width:1683px;height:2px;background:#eeeeee"></div>
<div class="a" style="left:76px;top:628px;width:1683px;height:2px;background:#eeeeee"></div>
<div class="a" style="left:76px;top:664px;width:1683px;height:2px;background:#eeeeee"></div>
<div class="a" style="left:76px;top:699px;width:1683px;height:2px;background:#eeeeee"></div>
<div class="a" style="left:76px;top:734px;width:1683px;height:2px;background:#eeeeee"></div>
<div class="a" style="left:76px;top:769px;width:1683px;height:2px;background:#eeeeee"></div>
<div class="a" style="left:76px;top:804px;width:1683px;height:2px;background:#eeeeee"></div>
<div class="vl" style="left:114.6px;top:172px;width:2.4px;height:634px;background:#e6e6e6"></div>
<div class="vl" style="left:115px;top:146px;width:1.5px;height:26px;background:#ececec"></div>
<div class="vl" style="left:202px;top:146px;width:1px;height:660px;background:#f7f7f7"></div>
<div class="vl" style="left:203px;top:146px;width:1px;height:660px;background:#ededed"></div>
<div class="vl" style="left:290px;top:146px;width:1px;height:660px;background:#f7f7f7"></div>
<div class="vl" style="left:291px;top:146px;width:1px;height:660px;background:#ededed"></div>
<div class="vl" style="left:378px;top:146px;width:1px;height:660px;background:#f7f7f7"></div>
<div class="vl" style="left:379px;top:146px;width:1px;height:660px;background:#ededed"></div>
<div class="vl" style="left:466px;top:146px;width:1px;height:660px;background:#f7f7f7"></div>
<div class="vl" style="left:467px;top:146px;width:1px;height:660px;background:#ededed"></div>
<div class="vl" style="left:615px;top:146px;width:1px;height:660px;background:#f7f7f7"></div>
<div class="vl" style="left:616px;top:146px;width:1px;height:660px;background:#ededed"></div>
<div class="vl" style="left:771px;top:146px;width:1px;height:660px;background:#f7f7f7"></div>
<div class="vl" style="left:772px;top:146px;width:1px;height:660px;background:#ededed"></div>
<div class="vl" style="left:859px;top:146px;width:1px;height:660px;background:#f7f7f7"></div>
<div class="vl" style="left:860px;top:146px;width:1px;height:660px;background:#ededed"></div>
<div class="vl" style="left:947px;top:146px;width:1px;height:660px;background:#f7f7f7"></div>
<div class="vl" style="left:948px;top:146px;width:1px;height:660px;background:#ededed"></div>
<div class="vl" style="left:1094px;top:146px;width:1px;height:660px;background:#f7f7f7"></div>
<div class="vl" style="left:1095px;top:146px;width:1px;height:660px;background:#ededed"></div>
<div class="vl" style="left:1209px;top:146px;width:1px;height:660px;background:#f7f7f7"></div>
<div class="vl" style="left:1210px;top:146px;width:1px;height:660px;background:#ededed"></div>
<div class="vl" style="left:1304px;top:146px;width:1px;height:660px;background:#f7f7f7"></div>
<div class="vl" style="left:1305px;top:146px;width:1px;height:660px;background:#ededed"></div>
<div class="vl" style="left:1399px;top:146px;width:1px;height:660px;background:#f7f7f7"></div>
<div class="vl" style="left:1400px;top:146px;width:1px;height:660px;background:#ededed"></div>
<div class="vl" style="left:1487px;top:146px;width:1px;height:660px;background:#f7f7f7"></div>
<div class="vl" style="left:1488px;top:146px;width:1px;height:660px;background:#ededed"></div>
<div class="vl" style="left:1581px;top:146px;width:1px;height:660px;background:#f7f7f7"></div>
<div class="vl" style="left:1582px;top:146px;width:1px;height:660px;background:#ededed"></div>
<div class="vl" style="left:1669px;top:146px;width:1px;height:660px;background:#f7f7f7"></div>
<div class="vl" style="left:1670px;top:146px;width:1px;height:660px;background:#ededed"></div>
<div class="vl" style="left:1757px;top:146px;width:1px;height:660px;background:#f7f7f7"></div>
<div class="vl" style="left:1758px;top:146px;width:1px;height:660px;background:#ededed"></div>
<div class="a" style="left:76px;top:170.4px;width:1683px;height:2px;background:#e8e8e8"></div>
<div class="cb" style="left:89px;top:183.20px"></div>
<div class="t" style="right:1716.30px;top:184.82px;font-size:13.8px;color:#8a8a8a;">1</div>
<div class="t" style="left:211.20px;top:184.82px;font-size:13.8px;color:#242424;">IT-1245</div>
<div class="chip" style="left:295.10px;top:178.80px;width:61px;background:#dde2fa">Laptop</div>
<div class="t" style="left:387.00px;top:184.82px;font-size:13.8px;color:#242424;">Apple</div>
<div class="t" style="left:475.10px;top:184.73px;font-size:13.9px;color:#242424;">MacBook Air M1</div>
<div class="t" style="left:624.30px;top:185.03px;font-size:13.55px;color:#242424;">OS: macOS Big Sur</div>
<div class="chip" style="left:776.8px;top:178.80px;width:78.2px;background:#dde1fa;color:#242424">Kate Wi...</div>
<div class="chip" style="left:864.9px;top:178.80px;width:75.9px;background:#c6eef0">Employ...</div>
<div class="chip" style="left:952.9px;top:178.80px;width:56.7px;background:#c6eef0">In Use</div>
<div class="t" style="left:1103.50px;top:184.89px;font-size:13.72px;color:#242424;">SN-202500046</div>
<div class="t" style="right:613.90px;top:184.35px;font-size:14.35px;color:#242424;">08/23/2022</div>
<div class="t" style="right:519.00px;top:184.35px;font-size:14.35px;color:#e4353d;">08/23/2023</div>
<div class="t" style="right:431.00px;top:184.82px;font-size:13.8px;color:#242424;">3</div>
<div class="t" style="right:248.40px;top:185.20px;font-size:13.35px;color:#242424;">1762.75</div>
<div class="cb" style="left:89px;top:218.40px"></div>
<div class="t" style="right:1716.30px;top:220.02px;font-size:13.8px;color:#8a8a8a;">2</div>
<div class="t" style="left:211.20px;top:220.02px;font-size:13.8px;color:#242424;">IT-1248</div>
<div class="chip" style="left:295.10px;top:214.00px;width:61px;background:#dde2fa">Laptop</div>
<div class="t" style="left:387.00px;top:220.02px;font-size:13.8px;color:#242424;">Lenovo</div>
<div class="t" style="left:475.10px;top:219.93px;font-size:13.9px;color:#242424;">IdeaPad Flex 5</div>
<div class="t" style="left:624.30px;top:220.23px;font-size:13.55px;color:#242424;">OS: Windows 11 Pro</div>
<div class="chip" style="left:776.8px;top:214.00px;width:76.2px;background:#dde8f8;color:#242424">John W...</div>
<div class="chip" style="left:864.9px;top:214.00px;width:56.3px;background:#dde2fa">Depot</div>
<div class="chip" style="left:952.9px;top:214.00px;width:56.7px;background:#c6eef0">In Use</div>
<div class="t" style="left:1103.50px;top:220.09px;font-size:13.72px;color:#242424;">SN-202500097</div>
<div class="t" style="right:613.90px;top:219.55px;font-size:14.35px;color:#242424;">09/14/2022</div>
<div class="t" style="right:519.00px;top:219.55px;font-size:14.35px;color:#22b522;">09/13/2025</div>
<div class="t" style="right:431.00px;top:220.02px;font-size:13.8px;color:#242424;">3</div>
<div class="t" style="right:248.40px;top:220.40px;font-size:13.35px;color:#242424;">1602.03</div>
<div class="cb" style="left:89px;top:253.60px"></div>
<div class="t" style="right:1716.30px;top:255.22px;font-size:13.8px;color:#8a8a8a;">3</div>
<div class="t" style="left:211.20px;top:255.22px;font-size:13.8px;color:#242424;">IT-1251</div>
<div class="chip" style="left:295.10px;top:249.20px;width:61px;background:#dde2fa">Laptop</div>
<div class="t" style="left:387.00px;top:255.22px;font-size:13.8px;color:#242424;">Apple</div>
<div class="t" style="left:475.10px;top:255.13px;font-size:13.9px;color:#242424;">MacBook Air M1</div>
<div class="t" style="left:624.30px;top:255.43px;font-size:13.55px;color:#242424;">OS: macOS Big Sur</div>
<div class="chip" style="left:776.8px;top:249.20px;width:72.4px;background:#d3f0e5;color:#242424">Emma ...</div>
<div class="chip" style="left:864.9px;top:249.20px;width:75.9px;background:#c6eef0">Employ...</div>
<div class="chip" style="left:952.9px;top:249.20px;width:56.7px;background:#c6eef0">In Use</div>
<div class="t" style="left:1103.50px;top:255.29px;font-size:13.72px;color:#242424;">SN-202500045</div>
<div class="t" style="right:613.90px;top:254.75px;font-size:14.35px;color:#242424;">09/29/2022</div>
<div class="t" style="right:519.00px;top:254.75px;font-size:14.35px;color:#22b522;">09/28/2025</div>
<div class="t" style="right:431.00px;top:255.22px;font-size:13.8px;color:#242424;">3</div>
<div class="t" style="right:248.40px;top:255.60px;font-size:13.35px;color:#242424;">1335.60</div>
<div class="cb" style="left:89px;top:288.80px"></div>
<div class="t" style="right:1716.30px;top:290.42px;font-size:13.8px;color:#8a8a8a;">4</div>
<div class="t" style="left:211.20px;top:290.42px;font-size:13.8px;color:#242424;">IT-1254</div>
<div class="chip" style="left:295.10px;top:284.40px;width:61px;background:#dde2fa">Laptop</div>
<div class="t" style="left:387.00px;top:290.42px;font-size:13.8px;color:#242424;">Lenovo</div>
<div class="t" style="left:475.10px;top:290.33px;font-size:13.9px;color:#242424;">ThinkPad X1 Carbon</div>
<div class="t" style="left:624.30px;top:290.63px;font-size:13.55px;color:#242424;">OS: Windows 11 Pro</div>
<div class="chip" style="left:776.8px;top:284.40px;width:77.7px;background:#fbe8c1;color:#242424">Noah D...</div>
<div class="chip" style="left:864.9px;top:284.40px;width:75.9px;background:#c6eef0">Employ...</div>
<div class="chip" style="left:952.9px;top:284.40px;width:56.7px;background:#c6eef0">In Use</div>
<div class="t" style="left:1103.50px;top:290.49px;font-size:13.72px;color:#242424;">SN-202500074</div>
<div class="t" style="right:613.90px;top:289.95px;font-size:14.35px;color:#242424;">10/03/2022</div>
<div class="t" style="right:519.00px;top:289.95px;font-size:14.35px;color:#e4353d;">10/02/2024</div>
<div class="t" style="right:431.00px;top:290.42px;font-size:13.8px;color:#242424;">3</div>
<div class="t" style="right:248.40px;top:290.80px;font-size:13.35px;color:#242424;">532.97</div>
<div class="cb" style="left:89px;top:324.00px"></div>
<div class="t" style="right:1716.30px;top:325.62px;font-size:13.8px;color:#8a8a8a;">5</div>
<div class="t" style="left:211.20px;top:325.62px;font-size:13.8px;color:#242424;">IT-1257</div>
<div class="chip" style="left:295.10px;top:319.60px;width:61px;background:#dde2fa">Laptop</div>
<div class="t" style="left:387.00px;top:325.62px;font-size:13.8px;color:#242424;">Apple</div>
<div class="t" style="left:475.10px;top:325.53px;font-size:13.9px;color:#242424;">MacBook Pro 13</div>
<div class="t" style="left:624.30px;top:325.83px;font-size:13.55px;color:#242424;">OS: macOS Big Sur</div>
<div class="chip" style="left:776.8px;top:319.60px;width:76.5px;background:#fde0d1;color:#242424">William...</div>
<div class="chip" style="left:864.9px;top:319.60px;width:75.9px;background:#c6eef0">Employ...</div>
<div class="chip" style="left:952.9px;top:319.60px;width:56.7px;background:#c6eef0">In Use</div>
<div class="t" style="left:1103.50px;top:325.69px;font-size:13.72px;color:#242424;">SN-202500095</div>
<div class="t" style="right:613.90px;top:325.15px;font-size:14.35px;color:#242424;">10/30/2022</div>
<div class="t" style="right:519.00px;top:325.15px;font-size:14.35px;color:#e4353d;">10/29/2024</div>
<div class="t" style="right:431.00px;top:325.62px;font-size:13.8px;color:#242424;">3</div>
<div class="t" style="right:336.40px;top:325.15px;font-size:14.35px;color:#242424;">02/11/2024</div>
<div class="t" style="right:248.40px;top:326.00px;font-size:13.35px;color:#242424;">2393.54</div>
<div class="cb" style="left:89px;top:359.20px"></div>
<div class="t" style="right:1716.30px;top:360.82px;font-size:13.8px;color:#8a8a8a;">6</div>
<div class="t" style="left:211.20px;top:360.82px;font-size:13.8px;color:#242424;">IT-1262</div>
<div class="chip" style="left:295.10px;top:354.80px;width:61px;background:#dde2fa">Laptop</div>
<div class="t" style="left:387.00px;top:360.82px;font-size:13.8px;color:#242424;">Apple</div>
<div class="t" style="left:475.10px;top:360.73px;font-size:13.9px;color:#242424;">MacBook Pro 16</div>
<div class="t" style="left:624.30px;top:361.03px;font-size:13.55px;color:#242424;">OS: macOS Ventura</div>
<div class="chip" style="left:776.8px;top:354.80px;width:76.5px;background:#e1e1e1;color:#242424">Amelia ...</div>
<div class="chip" style="left:864.9px;top:354.80px;width:75.9px;background:#c6eef0">Employ...</div>
<div class="chip" style="left:952.9px;top:354.80px;width:56.7px;background:#c6eef0">In Use</div>
<div class="t" style="left:1103.50px;top:360.89px;font-size:13.72px;color:#242424;">SN-202500099</div>
<div class="t" style="right:613.90px;top:360.35px;font-size:14.35px;color:#242424;">12/26/2022</div>
<div class="t" style="right:519.00px;top:360.35px;font-size:14.35px;color:#e4353d;">12/26/2023</div>
<div class="t" style="right:431.00px;top:360.82px;font-size:13.8px;color:#242424;">3</div>
<div class="t" style="right:248.40px;top:361.20px;font-size:13.35px;color:#242424;">1145.00</div>
<div class="cb" style="left:89px;top:394.40px"></div>
<div class="t" style="right:1716.30px;top:396.02px;font-size:13.8px;color:#8a8a8a;">7</div>
<div class="t" style="left:211.20px;top:396.02px;font-size:13.8px;color:#242424;">IT-1270</div>
<div class="chip" style="left:295.10px;top:390.00px;width:61px;background:#dde2fa">Laptop</div>
<div class="t" style="left:387.00px;top:396.02px;font-size:13.8px;color:#242424;">Lenovo</div>
<div class="t" style="left:475.10px;top:395.93px;font-size:13.9px;color:#242424;">Yoga Slim 7</div>
<div class="t" style="left:624.30px;top:396.23px;font-size:13.55px;color:#242424;">OS: Windows 10 Pro</div>
<div class="chip" style="left:776.8px;top:390.00px;width:71.4px;background:#7fd8df;color:#242424">Alexan...</div>
<div class="chip" style="left:864.9px;top:390.00px;width:75.9px;background:#c6eef0">Employ...</div>
<div class="chip" style="left:952.9px;top:390.00px;width:56.7px;background:#c6eef0">In Use</div>
<div class="t" style="left:1103.50px;top:396.09px;font-size:13.72px;color:#242424;">SN-202500030</div>
<div class="t" style="right:613.90px;top:395.55px;font-size:14.35px;color:#242424;">03/30/2023</div>
<div class="t" style="right:519.00px;top:395.55px;font-size:14.35px;color:#e4353d;">03/29/2024</div>
<div class="t" style="right:431.00px;top:396.02px;font-size:13.8px;color:#242424;">3</div>
<div class="t" style="right:248.40px;top:396.40px;font-size:13.35px;color:#242424;">1628.71</div>
<div class="cb" style="left:89px;top:429.60px"></div>
<div class="t" style="right:1716.30px;top:431.22px;font-size:13.8px;color:#8a8a8a;">8</div>
<div class="t" style="left:211.20px;top:431.22px;font-size:13.8px;color:#242424;">IT-1277</div>
<div class="chip" style="left:295.10px;top:425.20px;width:61px;background:#dde2fa">Laptop</div>
<div class="t" style="left:387.00px;top:431.22px;font-size:13.8px;color:#242424;">Lenovo</div>
<div class="t" style="left:475.10px;top:431.13px;font-size:13.9px;color:#242424;">Yoga Slim 7</div>
<div class="t" style="left:624.30px;top:431.43px;font-size:13.55px;color:#242424;">OS: Windows 11 Pro</div>
<div class="chip" style="left:776.8px;top:425.20px;width:78.3px;background:#eaa1a8;color:#242424">Elizabet...</div>
<div class="chip" style="left:864.9px;top:425.20px;width:75.9px;background:#c6eef0">Employ...</div>
<div class="chip" style="left:952.9px;top:425.20px;width:56.7px;background:#c6eef0">In Use</div>
<div class="t" style="left:1103.50px;top:431.29px;font-size:13.72px;color:#242424;">SN-202500056</div>
<div class="t" style="right:613.90px;top:430.75px;font-size:14.35px;color:#242424;">07/14/2023</div>
<div class="t" style="right:519.00px;top:430.75px;font-size:14.35px;color:#e4353d;">07/13/2025</div>
<div class="t" style="right:431.00px;top:431.22px;font-size:13.8px;color:#242424;">3</div>
<div class="t" style="right:248.40px;top:431.60px;font-size:13.35px;color:#242424;">483.22</div>
<div class="cb" style="left:89px;top:464.80px"></div>
<div class="t" style="right:1716.30px;top:466.42px;font-size:13.8px;color:#8a8a8a;">9</div>
<div class="t" style="left:211.20px;top:466.42px;font-size:13.8px;color:#242424;">IT-1284</div>
<div class="chip" style="left:295.10px;top:460.40px;width:61px;background:#dde2fa">Laptop</div>
<div class="t" style="left:387.00px;top:466.42px;font-size:13.8px;color:#242424;">Apple</div>
<div class="t" style="left:475.10px;top:466.33px;font-size:13.9px;color:#242424;">MacBook Pro 16</div>
<div class="t" style="left:624.30px;top:466.63px;font-size:13.55px;color:#242424;">OS: macOS Monterey</div>
<div class="chip" style="left:776.8px;top:460.40px;width:78.2px;background:#f6a56b;color:#242424">Lucas G...</div>
<div class="chip" style="left:864.9px;top:460.40px;width:75.9px;background:#c6eef0">Employ...</div>
<div class="chip" style="left:952.9px;top:460.40px;width:56.7px;background:#c6eef0">In Use</div>
<div class="t" style="left:1103.50px;top:466.49px;font-size:13.72px;color:#242424;">SN-202500022</div>
<div class="t" style="right:613.90px;top:465.95px;font-size:14.35px;color:#242424;">08/29/2023</div>
<div class="t" style="right:519.00px;top:465.95px;font-size:14.35px;color:#22b522;">08/28/2025</div>
<div class="t" style="right:431.00px;top:466.42px;font-size:13.8px;color:#242424;">3</div>
<div class="t" style="right:248.40px;top:466.80px;font-size:13.35px;color:#242424;">2410.13</div>
<div class="cb" style="left:89px;top:500.00px"></div>
<div class="t" style="right:1716.30px;top:501.62px;font-size:13.8px;color:#8a8a8a;">10</div>
<div class="t" style="left:211.20px;top:501.62px;font-size:13.8px;color:#242424;">IT-1287</div>
<div class="chip" style="left:295.10px;top:495.60px;width:61px;background:#dde2fa">Laptop</div>
<div class="t" style="left:387.00px;top:501.62px;font-size:13.8px;color:#242424;">Dell</div>
<div class="t" style="left:475.10px;top:501.53px;font-size:13.9px;color:#242424;">XPS 13</div>
<div class="t" style="left:624.30px;top:501.83px;font-size:13.55px;color:#242424;">OS: Windows 11 Pro</div>
<div class="chip" style="left:776.8px;top:495.60px;width:77.5px;background:#e6a0cf;color:#242424">Grace B...</div>
<div class="chip" style="left:864.9px;top:495.60px;width:75.9px;background:#c6eef0">Employ...</div>
<div class="chip" style="left:952.9px;top:495.60px;width:56.7px;background:#c6eef0">In Use</div>
<div class="t" style="left:1103.50px;top:501.69px;font-size:13.72px;color:#242424;">SN-202500032</div>
<div class="t" style="right:613.90px;top:501.15px;font-size:14.35px;color:#242424;">10/04/2023</div>
<div class="t" style="right:519.00px;top:501.15px;font-size:14.35px;color:#242424;">10/03/2026</div>
<div class="t" style="right:431.00px;top:501.62px;font-size:13.8px;color:#242424;">3</div>
<div class="t" style="right:248.40px;top:502.00px;font-size:13.35px;color:#242424;">1545.73</div>
<div class="cb" style="left:89px;top:535.20px"></div>
<div class="t" style="right:1716.30px;top:536.82px;font-size:13.8px;color:#8a8a8a;">11</div>
<div class="t" style="left:211.20px;top:536.82px;font-size:13.8px;color:#242424;">IT-1289</div>
<div class="chip" style="left:295.10px;top:530.80px;width:61px;background:#dde2fa">Laptop</div>
<div class="t" style="left:387.00px;top:536.82px;font-size:13.8px;color:#242424;">Apple</div>
<div class="t" style="left:475.10px;top:536.73px;font-size:13.9px;color:#242424;">MacBook Air M1</div>
<div class="t" style="left:624.30px;top:537.03px;font-size:13.55px;color:#242424;">OS: macOS Monterey</div>
<div class="chip" style="left:776.8px;top:530.80px;width:70.1px;background:#d2c4e3;color:#242424">Oliver ...</div>
<div class="chip" style="left:864.9px;top:530.80px;width:75.9px;background:#c6eef0">Employ...</div>
<div class="chip" style="left:952.9px;top:530.80px;width:56.7px;background:#c6eef0">In Use</div>
<div class="t" style="left:1103.50px;top:536.89px;font-size:13.72px;color:#242424;">SN-202500029</div>
<div class="t" style="right:613.90px;top:536.35px;font-size:14.35px;color:#242424;">10/21/2023</div>
<div class="t" style="right:519.00px;top:536.35px;font-size:14.35px;color:#e4353d;">10/20/2024</div>
<div class="t" style="right:431.00px;top:536.82px;font-size:13.8px;color:#242424;">3</div>
<div class="t" style="right:248.40px;top:537.20px;font-size:13.35px;color:#242424;">1943.18</div>
<div class="cb" style="left:89px;top:570.40px"></div>
<div class="t" style="right:1716.30px;top:572.02px;font-size:13.8px;color:#8a8a8a;">12</div>
<div class="t" style="left:211.20px;top:572.02px;font-size:13.8px;color:#242424;">IT-1291</div>
<div class="chip" style="left:295.10px;top:566.00px;width:61px;background:#dde2fa">Laptop</div>
<div class="t" style="left:387.00px;top:572.02px;font-size:13.8px;color:#242424;">Apple</div>
<div class="t" style="left:475.10px;top:571.93px;font-size:13.9px;color:#242424;">MacBook Air M1</div>
<div class="t" style="left:624.30px;top:572.23px;font-size:13.55px;color:#242424;">OS: macOS Monterey</div>
<div class="chip" style="left:776.8px;top:566.00px;width:73.2px;background:#c2c2c2;color:#242424">Lily Ste...</div>
<div class="chip" style="left:864.9px;top:566.00px;width:75.9px;background:#c6eef0">Employ...</div>
<div class="chip" style="left:952.9px;top:566.00px;width:56.7px;background:#c6eef0">In Use</div>
<div class="t" style="left:1103.50px;top:572.09px;font-size:13.72px;color:#242424;">SN-202500078</div>
<div class="t" style="right:613.90px;top:571.55px;font-size:14.35px;color:#242424;">10/25/2023</div>
<div class="t" style="right:519.00px;top:571.55px;font-size:14.35px;color:#242424;">10/24/2025</div>
<div class="t" style="right:431.00px;top:572.02px;font-size:13.8px;color:#242424;">3</div>
<div class="t" style="right:248.40px;top:572.40px;font-size:13.35px;color:#242424;">1083.84</div>
<div class="cb" style="left:89px;top:605.60px"></div>
<div class="t" style="right:1716.30px;top:607.22px;font-size:13.8px;color:#8a8a8a;">13</div>
<div class="t" style="left:211.20px;top:607.22px;font-size:13.8px;color:#242424;">IT-1293</div>
<div class="chip" style="left:295.10px;top:601.20px;width:61px;background:#dde2fa">Laptop</div>
<div class="t" style="left:387.00px;top:607.22px;font-size:13.8px;color:#242424;">Lenovo</div>
<div class="t" style="left:475.10px;top:607.13px;font-size:13.9px;color:#242424;">Yoga Slim 7</div>
<div class="t" style="left:624.30px;top:607.43px;font-size:13.55px;color:#242424;">OS: Windows 11 Pro</div>
<div class="chip" style="left:776.8px;top:601.20px;width:69.2px;background:#0b84f5;color:#ffffff">Avery ...</div>
<div class="chip" style="left:864.9px;top:601.20px;width:75.9px;background:#c6eef0">Employ...</div>
<div class="chip" style="left:952.9px;top:601.20px;width:56.7px;background:#c6eef0">In Use</div>
<div class="t" style="left:1103.50px;top:607.29px;font-size:13.72px;color:#242424;">SN-202500083</div>
<div class="t" style="right:613.90px;top:606.75px;font-size:14.35px;color:#242424;">11/04/2023</div>
<div class="t" style="right:519.00px;top:606.75px;font-size:14.35px;color:#242424;">11/03/2025</div>
<div class="t" style="right:431.00px;top:607.22px;font-size:13.8px;color:#242424;">3</div>
<div class="t" style="right:248.40px;top:607.60px;font-size:13.35px;color:#242424;">897.88</div>
<div class="cb" style="left:89px;top:640.80px"></div>
<div class="t" style="right:1716.30px;top:642.42px;font-size:13.8px;color:#8a8a8a;">14</div>
<div class="t" style="left:211.20px;top:642.42px;font-size:13.8px;color:#242424;">IT-1298</div>
<div class="chip" style="left:295.10px;top:636.40px;width:61px;background:#dde2fa">Laptop</div>
<div class="t" style="left:387.00px;top:642.42px;font-size:13.8px;color:#242424;">Apple</div>
<div class="t" style="left:475.10px;top:642.33px;font-size:13.9px;color:#242424;">MacBook Air M1</div>
<div class="t" style="left:624.30px;top:642.63px;font-size:13.55px;color:#242424;">OS: macOS Monterey</div>
<div class="chip" style="left:776.8px;top:636.40px;width:76.3px;background:#179c7f;color:#ffffff">Scarlett...</div>
<div class="chip" style="left:864.9px;top:636.40px;width:75.9px;background:#c6eef0">Employ...</div>
<div class="chip" style="left:952.9px;top:636.40px;width:56.7px;background:#c6eef0">In Use</div>
<div class="t" style="left:1103.50px;top:642.49px;font-size:13.72px;color:#242424;">SN-202500081</div>
<div class="t" style="right:613.90px;top:641.95px;font-size:14.35px;color:#242424;">12/18/2023</div>
<div class="t" style="right:519.00px;top:641.95px;font-size:14.35px;color:#e4353d;">12/17/2024</div>
<div class="t" style="right:431.00px;top:642.42px;font-size:13.8px;color:#242424;">3</div>
<div class="t" style="right:248.40px;top:642.80px;font-size:13.35px;color:#242424;">2486.75</div>
<div class="cb" style="left:89px;top:676.00px"></div>
<div class="t" style="right:1716.30px;top:677.62px;font-size:13.8px;color:#8a8a8a;">15</div>
<div class="t" style="left:211.20px;top:677.62px;font-size:13.8px;color:#242424;">IT-1310</div>
<div class="chip" style="left:295.10px;top:671.60px;width:61px;background:#dde2fa">Laptop</div>
<div class="t" style="left:387.00px;top:677.62px;font-size:13.8px;color:#242424;">Lenovo</div>
<div class="t" style="left:475.10px;top:677.53px;font-size:13.9px;color:#242424;">ThinkPad X1 Carbon</div>
<div class="t" style="left:624.30px;top:677.83px;font-size:13.55px;color:#242424;">OS: Windows 11 Pro</div>
<div class="chip" style="left:776.8px;top:671.60px;width:73.2px;background:#dd1326;color:#ffffff">Aria Sa...</div>
<div class="chip" style="left:864.9px;top:671.60px;width:75.9px;background:#c6eef0">Employ...</div>
<div class="chip" style="left:952.9px;top:671.60px;width:56.7px;background:#c6eef0">In Use</div>
<div class="t" style="left:1103.50px;top:677.69px;font-size:13.72px;color:#242424;">SN-202500003</div>
<div class="t" style="right:613.90px;top:677.15px;font-size:14.35px;color:#242424;">03/30/2024</div>
<div class="t" style="right:519.00px;top:677.15px;font-size:14.35px;color:#e4353d;">03/30/2025</div>
<div class="t" style="right:431.00px;top:677.62px;font-size:13.8px;color:#242424;">3</div>
<div class="t" style="right:248.40px;top:678.00px;font-size:13.35px;color:#242424;">1258.67</div>
<div class="cb" style="left:89px;top:711.20px"></div>
<div class="t" style="right:1716.30px;top:712.82px;font-size:13.8px;color:#8a8a8a;">16</div>
<div class="t" style="left:211.20px;top:712.82px;font-size:13.8px;color:#242424;">IT-1312</div>
<div class="chip" style="left:295.10px;top:706.80px;width:61px;background:#dde2fa">Laptop</div>
<div class="t" style="left:387.00px;top:712.82px;font-size:13.8px;color:#242424;">Dell</div>
<div class="t" style="left:475.10px;top:712.73px;font-size:13.9px;color:#242424;">XPS 13</div>
<div class="t" style="left:624.30px;top:713.03px;font-size:13.55px;color:#242424;">OS: Windows 11 Pro</div>
<div class="chip" style="left:776.8px;top:706.80px;width:77.1px;background:#f5660f;color:#ffffff">Isaac Pr...</div>
<div class="chip" style="left:864.9px;top:706.80px;width:75.9px;background:#c6eef0">Employ...</div>
<div class="chip" style="left:952.9px;top:706.80px;width:56.7px;background:#c6eef0">In Use</div>
<div class="t" style="left:1103.50px;top:712.89px;font-size:13.72px;color:#242424;">SN-202500013</div>
<div class="t" style="right:613.90px;top:712.35px;font-size:14.35px;color:#242424;">04/20/2024</div>
<div class="t" style="right:519.00px;top:712.35px;font-size:14.35px;color:#e4353d;">04/20/2025</div>
<div class="t" style="right:431.00px;top:712.82px;font-size:13.8px;color:#242424;">3</div>
<div class="t" style="right:248.40px;top:713.20px;font-size:13.35px;color:#242424;">844.41</div>
<div class="cb" style="left:89px;top:746.40px"></div>
<div class="t" style="right:1716.30px;top:748.02px;font-size:13.8px;color:#8a8a8a;">17</div>
<div class="t" style="left:211.20px;top:748.02px;font-size:13.8px;color:#242424;">IT-1330</div>
<div class="chip" style="left:295.10px;top:742.00px;width:61px;background:#dde2fa">Laptop</div>
<div class="t" style="left:387.00px;top:748.02px;font-size:13.8px;color:#242424;">Dell</div>
<div class="t" style="left:475.10px;top:747.93px;font-size:13.9px;color:#242424;">Latitude 5420</div>
<div class="t" style="left:624.30px;top:748.23px;font-size:13.55px;color:#242424;">OS: Windows 11 Pro</div>
<div class="chip" style="left:776.8px;top:742.00px;width:71.6px;background:#6e38b1;color:#ffffff">Sofia T...</div>
<div class="chip" style="left:864.9px;top:742.00px;width:75.9px;background:#c6eef0">Employ...</div>
<div class="chip" style="left:952.9px;top:742.00px;width:56.7px;background:#c6eef0">In Use</div>
<div class="t" style="left:1103.50px;top:748.09px;font-size:13.72px;color:#242424;">SN-202500066</div>
<div class="t" style="right:613.90px;top:747.55px;font-size:14.35px;color:#242424;">11/06/2024</div>
<div class="t" style="right:519.00px;top:747.55px;font-size:14.35px;color:#242424;">11/06/2026</div>
<div class="t" style="right:431.00px;top:748.02px;font-size:13.8px;color:#242424;">3</div>
<div class="t" style="right:248.40px;top:748.40px;font-size:13.35px;color:#242424;">1599.11</div>
<div class="cb" style="left:89px;top:781.60px"></div>
<div class="t" style="right:1716.30px;top:783.22px;font-size:13.8px;color:#8a8a8a;">18</div>
<div class="t" style="left:211.20px;top:783.22px;font-size:13.8px;color:#242424;">IT-1249</div>
<div class="chip" style="left:295.10px;top:777.20px;width:61px;background:#dde2fa">Laptop</div>
<div class="t" style="left:387.00px;top:783.22px;font-size:13.8px;color:#242424;">Apple</div>
<div class="t" style="left:475.10px;top:783.13px;font-size:13.9px;color:#242424;">MacBook Pro 13</div>
<div class="t" style="left:624.30px;top:783.43px;font-size:13.55px;color:#242424;">OS: macOS Monterey</div>
<div class="chip" style="left:776.8px;top:777.20px;width:77.1px;background:#c7eef1;color:#242424">Abigail ...</div>
<div class="chip" style="left:864.9px;top:777.20px;width:56.3px;background:#dde2fa">Depot</div>
<div class="chip" style="left:952.9px;top:777.20px;width:74.3px;background:#dde2fa">Assigned</div>
<div class="t" style="left:1103.50px;top:783.29px;font-size:13.72px;color:#242424;">SN-202500036</div>
<div class="t" style="right:613.90px;top:782.75px;font-size:14.35px;color:#242424;">09/16/2022</div>
<div class="t" style="right:519.00px;top:782.75px;font-size:14.35px;color:#e4353d;">09/15/2024</div>
<div class="t" style="right:431.00px;top:783.22px;font-size:13.8px;color:#242424;">3</div>
<div class="t" style="right:248.40px;top:783.60px;font-size:13.35px;color:#242424;">1218.30</div>
<div class="a" style="left:76px;top:838.5px;width:1828px;height:30px;background:#fafafa;border-top:1px solid #e0e0e0;border-bottom:1px solid #e0e0e0"></div>
<div class="t" style="left:84.70px;top:848.75px;font-size:11.4px;color:#242424;-webkit-text-stroke:0;letter-spacing:-0.195px;">Rows: 100</div>
<div class="a" style="left:152.5px;top:843px;width:1px;height:21px;background:#e0e0e0"></div>
<div class="t" style="left:168.00px;top:848.75px;font-size:11.4px;color:#242424;-webkit-text-stroke:0;letter-spacing:0.111px;">Columns: 16</div>
<div class="a" style="left:245px;top:843px;width:1px;height:21px;background:#e0e0e0"></div>
<svg style="left:263px;top:846px;" width="14" height="16" viewBox="0 0 14 16"><path fill="none" stroke="#424242" stroke-width="1.2" stroke-linecap="round" stroke-linejoin="round" d="M2,3.8 Q2,1.5 7,1.5 Q12,1.5 12,3.8 L12,12.2 Q12,14.5 7,14.5 Q2,14.5 2,12.2 Z M2,3.8 Q2,6.1 7,6.1 Q12,6.1 12,3.8"/></svg>
<div class="t" style="left:281.50px;top:848.75px;font-size:11.4px;color:#242424;-webkit-text-stroke:0;letter-spacing:-0.203px;">PowerTable_Demos_...</div>
<svg style="left:418px;top:846px;" width="18" height="16" viewBox="0 0 18 16"><rect x="1.8" y="1.5" width="13.5" height="13" rx="2" fill="none" stroke="#424242" stroke-width="1.2" stroke-linecap="round" stroke-linejoin="round"/><path fill="none" stroke="#424242" stroke-width="1.2" stroke-linecap="round" stroke-linejoin="round" d="M6.3,1.5 L6.3,14.5 M10.8,1.5 L10.8,14.5 M1.8,5.8 L15.3,5.8 M1.8,10.2 L15.3,10.2"/></svg>
<div class="t" style="left:441.20px;top:848.75px;font-size:11.4px;color:#242424;-webkit-text-stroke:0;letter-spacing:-0.082px;">itam_assets</div>
<svg style="left:520px;top:845px;" width="18" height="18" viewBox="0 0 18 18"><path fill="none" stroke="#424242" stroke-width="1.2" stroke-linecap="round" stroke-linejoin="round" d="M3.5,11.5 Q2.5,5 8,3.2 Q11,2.5 13.5,4.5 M11.5,1.8 L13.8,4.6 L11,6.5 M14.5,6.5 Q15.5,13 10,14.8 Q7,15.5 4.5,13.5 M6.5,16.2 L4.2,13.4 L7,11.5"/></svg>
<div class="t" style="left:542.50px;top:848.75px;font-size:11.4px;color:#242424;-webkit-text-stroke:0;letter-spacing:-0.415px;">Sync</div>
<div class="a" style="left:588.5px;top:841px;width:1px;height:23.5px;background:#e0e0e0"></div>
<svg style="left:605px;top:850px;" width="16" height="8" viewBox="0 0 16 8"><path d="M2.5,3.8 L13,3.8" stroke="#424242" stroke-width="1.2"/></svg>
<div class="a" style="left:627.3px;top:842.4px;width:54px;height:23.3px;background:#fff;border:1px solid #d1d1d1;border-bottom:1.5px solid #616161;border-radius:4px"></div>
<div class="t" style="left:638.90px;top:849.75px;font-size:11.4px;color:#242424;-webkit-text-stroke:0;letter-spacing:0.630px;">110%</div>
<svg style="left:685px;top:846px;" width="16" height="16" viewBox="0 0 16 16"><path d="M7.6,2.5 L7.6,13.3 M2.2,7.9 L13,7.9" stroke="#424242" stroke-width="1.2"/></svg>
<svg style="left:1644px;top:846px;" width="16" height="16" viewBox="0 0 16 16"><path fill="none" stroke="#9e9e9e" stroke-width="1.2" stroke-linecap="round" stroke-linejoin="round" d="M3,3 L3,13 M11.5,3 L6.5,8 L11.5,13"/></svg>
<svg style="left:1669px;top:846px;" width="12" height="16" viewBox="0 0 12 16"><path fill="none" stroke="#9e9e9e" stroke-width="1.2" stroke-linecap="round" stroke-linejoin="round" d="M7.8,3.5 L3.5,8 L7.8,12.5"/></svg>
<div class="t" style="left:1689.30px;top:849.25px;font-size:11.4px;color:#242424;-webkit-text-stroke:0;letter-spacing:-0.508px;">Page</div>
<div class="a" style="left:1719.5px;top:842.4px;width:47px;height:23.3px;background:#fff;border:1px solid #d1d1d1;border-bottom:1.5px solid #616161;border-radius:4px"></div>
<div class="t" style="left:1739.40px;top:850.25px;font-size:11.4px;color:#242424;-webkit-text-stroke:0;">1</div>
<div class="t" style="left:1770.90px;top:849.75px;font-size:11.4px;color:#242424;-webkit-text-stroke:0;letter-spacing:0.296px;">of 6</div>
<svg style="left:1800px;top:846px;" width="12" height="16" viewBox="0 0 12 16"><path fill="none" stroke="#424242" stroke-width="1.2" stroke-linecap="round" stroke-linejoin="round" d="M3.8,3.5 L8,8 L3.8,12.5"/></svg>
<svg style="left:1820px;top:846px;" width="16" height="16" viewBox="0 0 16 16"><path fill="none" stroke="#424242" stroke-width="1.2" stroke-linecap="round" stroke-linejoin="round" d="M3.5,3 L8.5,8 L3.5,13 M13,3 L13,13"/></svg>
<div class="a" style="left:1853px;top:841px;width:1px;height:23.5px;background:#e0e0e0"></div>
<svg style="left:1868px;top:843px;" width="20" height="20" viewBox="0 0 20 20"><path fill="none" stroke="#424242" stroke-width="1.2" stroke-linecap="round" stroke-linejoin="round" d="M18.00,10.00 L17.93,11.04 L15.70,11.53 L15.45,12.26 L15.11,12.95 L16.35,14.87 L15.66,15.66 L14.87,16.35 L12.95,15.11 L12.26,15.45 L11.53,15.70 L11.04,17.93 L10.00,18.00 L8.96,17.93 L8.47,15.70 L7.74,15.45 L7.05,15.11 L5.13,16.35 L4.34,15.66 L3.65,14.87 L4.89,12.95 L4.55,12.26 L4.30,11.53 L2.07,11.04 L2.00,10.00 L2.07,8.96 L4.30,8.47 L4.55,7.74 L4.89,7.05 L3.65,5.13 L4.34,4.34 L5.13,3.65 L7.05,4.89 L7.74,4.55 L8.47,4.30 L8.96,2.07 L10.00,2.00 L11.04,2.07 L11.53,4.30 L12.26,4.55 L12.95,4.89 L14.87,3.65 L15.66,4.34 L16.35,5.13 L15.11,7.05 L15.45,7.74 L15.70,8.47 L17.93,8.96 Z"/><circle cx="10" cy="10" r="2.3" fill="none" stroke="#424242" stroke-width="1.2" stroke-linecap="round" stroke-linejoin="round"/></svg>
<div class="a" style="left:84px;top:875.2px;width:176px;height:31.8px;background:#ebebeb;border-radius:6px"></div>
<svg style="left:92px;top:882px;" width="18" height="18" viewBox="0 0 18 18"><rect x="1.6" y="1.6" width="12.4" height="12.6" fill="none" stroke="#1f7a66" stroke-width="1.4"/><path d="M5.2,1.6 L5.2,14.2 M1.6,4.8 L14,4.8 M1.6,8 L5.2,8 M1.6,11.1 L5.2,11.1" fill="none" stroke="#1f7a66" stroke-width="1.3"/><path d="M7.2,8 Q7.2,6 12,6 Q16.8,6 16.8,8 L16.8,15 Q16.8,17 12,17 Q7.2,17 7.2,15 Z" fill="#1f7a66" stroke="#fff" stroke-width="0.9"/><path d="M7.6,9.6 Q7.6,11 12,11 Q16.4,11 16.4,9.6" fill="none" stroke="#fff" stroke-width="0.7" opacity="0.8"/></svg>
<div class="t" style="left:116.50px;top:884.83px;font-size:13.2px;color:#242424;letter-spacing:-0.342px;">Assets</div>
<svg style="left:236px;top:882px;" width="18" height="18" viewBox="0 0 18 18"><path d="M3,3 L15,15 M15,3 L3,15" stroke="#555" stroke-width="1.2"/></svg>
<svg style="left:269.2px;top:882px;" width="18" height="18" viewBox="0 0 18 18"><rect x="1.6" y="1.6" width="12.4" height="12.6" fill="none" stroke="#242424" stroke-width="1.4"/><path d="M5.2,1.6 L5.2,14.2 M1.6,4.8 L14,4.8 M1.6,8 L5.2,8 M1.6,11.1 L5.2,11.1" fill="none" stroke="#242424" stroke-width="1.3"/><path d="M7.2,8 Q7.2,6 12,6 Q16.8,6 16.8,8 L16.8,15 Q16.8,17 12,17 Q7.2,17 7.2,15 Z" fill="#242424" stroke="#fff" stroke-width="0.9"/><path d="M7.6,9.6 Q7.6,11 12,11 Q16.4,11 16.4,9.6" fill="none" stroke="#fff" stroke-width="0.7" opacity="0.8"/></svg>
<div class="t" style="left:293.80px;top:884.83px;font-size:13.2px;color:#242424;letter-spacing:-0.116px;">Asset Types</div>
<svg style="left:446.2px;top:882px;" width="18" height="18" viewBox="0 0 18 18"><rect x="1.6" y="1.6" width="12.4" height="12.6" fill="none" stroke="#242424" stroke-width="1.4"/><path d="M5.2,1.6 L5.2,14.2 M1.6,4.8 L14,4.8 M1.6,8 L5.2,8 M1.6,11.1 L5.2,11.1" fill="none" stroke="#242424" stroke-width="1.3"/><path d="M7.2,8 Q7.2,6 12,6 Q16.8,6 16.8,8 L16.8,15 Q16.8,17 12,17 Q7.2,17 7.2,15 Z" fill="#242424" stroke="#fff" stroke-width="0.9"/><path d="M7.6,9.6 Q7.6,11 12,11 Q16.4,11 16.4,9.6" fill="none" stroke="#fff" stroke-width="0.7" opacity="0.8"/></svg>
<div class="t" style="left:470.00px;top:884.83px;font-size:13.2px;color:#242424;letter-spacing:0.076px;">Employees</div>
<svg style="left:623.2px;top:882px;" width="18" height="18" viewBox="0 0 18 18"><rect x="1.6" y="1.6" width="12.4" height="12.6" fill="none" stroke="#242424" stroke-width="1.4"/><path d="M5.2,1.6 L5.2,14.2 M1.6,4.8 L14,4.8 M1.6,8 L5.2,8 M1.6,11.1 L5.2,11.1" fill="none" stroke="#242424" stroke-width="1.3"/><path d="M7.2,8 Q7.2,6 12,6 Q16.8,6 16.8,8 L16.8,15 Q16.8,17 12,17 Q7.2,17 7.2,15 Z" fill="#242424" stroke="#fff" stroke-width="0.9"/><path d="M7.6,9.6 Q7.6,11 12,11 Q16.4,11 16.4,9.6" fill="none" stroke="#fff" stroke-width="0.7" opacity="0.8"/></svg>
<div class="t" style="left:647.70px;top:884.83px;font-size:13.2px;color:#242424;letter-spacing:0.137px;">Locations</div>
<svg style="left:799.7px;top:882px;" width="18" height="18" viewBox="0 0 18 18"><rect x="1.6" y="1.6" width="12.4" height="12.6" fill="none" stroke="#242424" stroke-width="1.4"/><path d="M5.2,1.6 L5.2,14.2 M1.6,4.8 L14,4.8 M1.6,8 L5.2,8 M1.6,11.1 L5.2,11.1" fill="none" stroke="#242424" stroke-width="1.3"/><path d="M7.2,8 Q7.2,6 12,6 Q16.8,6 16.8,8 L16.8,15 Q16.8,17 12,17 Q7.2,17 7.2,15 Z" fill="#242424" stroke="#fff" stroke-width="0.9"/><path d="M7.6,9.6 Q7.6,11 12,11 Q16.4,11 16.4,9.6" fill="none" stroke="#fff" stroke-width="0.7" opacity="0.8"/></svg>
<div class="t" style="left:824.50px;top:884.83px;font-size:13.2px;color:#242424;letter-spacing:-0.072px;">Asset Requests</div>
<div class="a" style="left:436.8px;top:880.5px;width:1px;height:20.5px;background:#d6d6d6"></div>
<div class="a" style="left:613.8px;top:880.5px;width:1px;height:20.5px;background:#d6d6d6"></div>
<div class="a" style="left:791.1px;top:880.5px;width:1px;height:20.5px;background:#d6d6d6"></div>
<div class="a" style="left:967.8px;top:880.5px;width:1px;height:20.5px;background:#d6d6d6"></div>
<svg style="left:980px;top:882px;" width="18" height="18" viewBox="0 0 18 18"><path d="M9,1 L9,17 M1,9 L17,9" stroke="#555" stroke-width="1.3"/></svg>
<svg style="left:1845px;top:882px;" width="18" height="18" viewBox="0 0 18 18"><path fill="none" stroke="#424242" stroke-width="1.2" stroke-linecap="round" stroke-linejoin="round" d="M18.00,10.00 L17.93,11.04 L15.70,11.53 L15.45,12.26 L15.11,12.95 L16.35,14.87 L15.66,15.66 L14.87,16.35 L12.95,15.11 L12.26,15.45 L11.53,15.70 L11.04,17.93 L10.00,18.00 L8.96,17.93 L8.47,15.70 L7.74,15.45 L7.05,15.11 L5.13,16.35 L4.34,15.66 L3.65,14.87 L4.89,12.95 L4.55,12.26 L4.30,11.53 L2.07,11.04 L2.00,10.00 L2.07,8.96 L4.30,8.47 L4.55,7.74 L4.89,7.05 L3.65,5.13 L4.34,4.34 L5.13,3.65 L7.05,4.89 L7.74,4.55 L8.47,4.30 L8.96,2.07 L10.00,2.00 L11.04,2.07 L11.53,4.30 L12.26,4.55 L12.95,4.89 L14.87,3.65 L15.66,4.34 L16.35,5.13 L15.11,7.05 L15.45,7.74 L15.70,8.47 L17.93,8.96 Z" transform="translate(0.6,0.6) scale(0.84)"/><circle cx="9" cy="9" r="2" fill="none" stroke="#424242" stroke-width="1.2" stroke-linecap="round" stroke-linejoin="round"/></svg>
<svg style="left:1876px;top:880px;" width="24" height="22" viewBox="0 0 24 22"><rect x="7.2" y="6.2" width="14.6" height="14.6" rx="3.5" fill="#fff" stroke="#242424" stroke-width="1.5"/><path d="M5,17 L5,8 Q5,4 9,4 L17,4" fill="none" stroke="#555" stroke-width="1.4"/><path d="M2.2,14.5 L2.2,6 Q2.2,1.5 6.5,1.5 L14.5,1.5" fill="none" stroke="#242424" stroke-width="1.4"/></svg>
</div></body></html>
